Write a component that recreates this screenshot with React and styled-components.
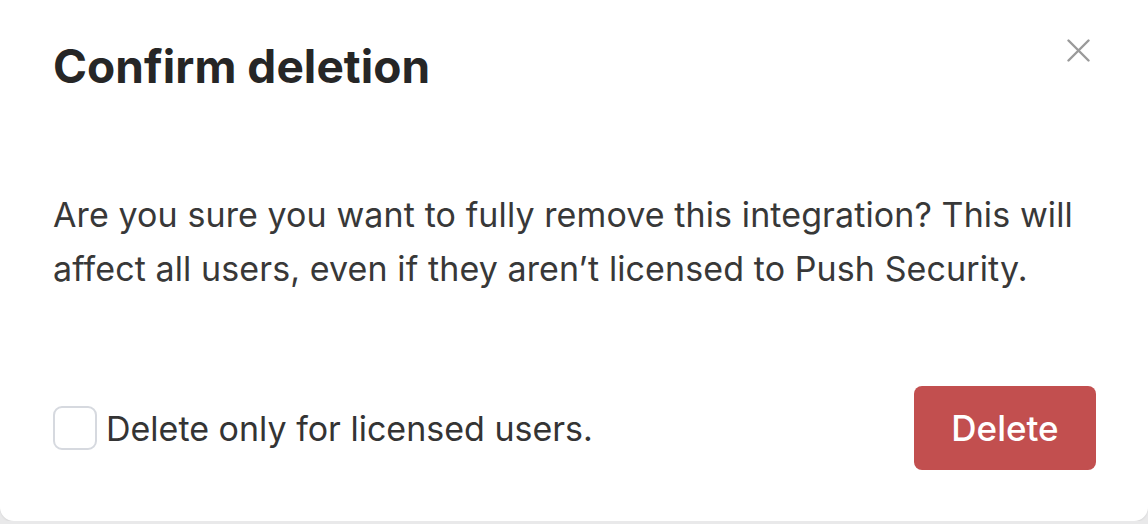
import React from "react";
import styled, { createGlobalStyle } from "styled-components";

const GlobalStyle = createGlobalStyle`
  html, body {
    margin: 0;
    padding: 0;
    background: #e9e9ea;
  }
  body {
    font-family: Inter, "Noto Sans", "Liberation Sans", sans-serif;
    -webkit-font-smoothing: antialiased;
  }
  * { box-sizing: border-box; }
`;

const Modal = styled.div`
  width: 1148px;
  height: 521px;
  background: #ffffff;
  border-radius: 0 0 14px 14px;
  padding: 41px 52px 51px 53px;
  display: flex;
  flex-direction: column;
  box-shadow: 0 1px 2px rgba(0, 0, 0, 0.08);
`;

const Header = styled.div`
  display: flex;
  justify-content: space-between;
  align-items: flex-start;
`;

const Title = styled.h2`
  margin: 0;
  font-size: 46px;
  line-height: 50px;
  font-weight: 700;
  color: #262626;
  letter-spacing: 0.05px;
`;

const CloseButton = styled.button`
  width: 44px;
  height: 44px;
  margin: -13px -4px 0 0;
  padding: 0;
  border: none;
  background: transparent;
  display: flex;
  align-items: center;
  justify-content: center;
  color: #9a9a9a;
  cursor: pointer;
`;

const Body = styled.p`
  margin: 97px 0 0;
  max-width: 1050px;
  font-size: 34px;
  line-height: 54px;
  letter-spacing: 0.1px;
  color: #383838;
  font-weight: 400;
`;

const Footer = styled.div`
  margin-top: auto;
  display: flex;
  align-items: center;
  justify-content: space-between;
`;

const CheckLabel = styled.label`
  display: flex;
  align-items: center;
  gap: 9px;
  font-size: 34px;
  color: #343434;
  cursor: pointer;
`;

const Box = styled.span`
  width: 44px;
  height: 44px;
  border: 2px solid #d6d9df;
  border-radius: 9px;
  background: #fff;
  display: inline-block;
  flex: none;
`;

const DeleteButton = styled.button`
  width: 182px;
  height: 84px;
  border: none;
  border-radius: 8px;
  background: #c24f4f;
  color: #ffffff;
  font-family: inherit;
  font-size: 35px;
  font-weight: 500;
  cursor: pointer;
`;

export default function App() {
  return (
    <>
      <GlobalStyle />
      <Modal>
        <Header>
          <Title>Confirm deletion</Title>
          <CloseButton aria-label="Close">
            <svg width="23" height="23" viewBox="0 0 23 23" fill="none">
              <path d="M1.5 1.5 L21.5 21.5 M21.5 1.5 L1.5 21.5" stroke="currentColor" strokeWidth="2.4" strokeLinecap="round" />
            </svg>
          </CloseButton>
        </Header>
        <Body>
          Are you sure you want to fully remove this integration? This will
          affect all users, even if they aren’t licensed to Push Security.
        </Body>
        <Footer>
          <CheckLabel>
            <Box />
            Delete only for licensed users.
          </CheckLabel>
          <DeleteButton>Delete</DeleteButton>
        </Footer>
      </Modal>
    </>
  );
}
